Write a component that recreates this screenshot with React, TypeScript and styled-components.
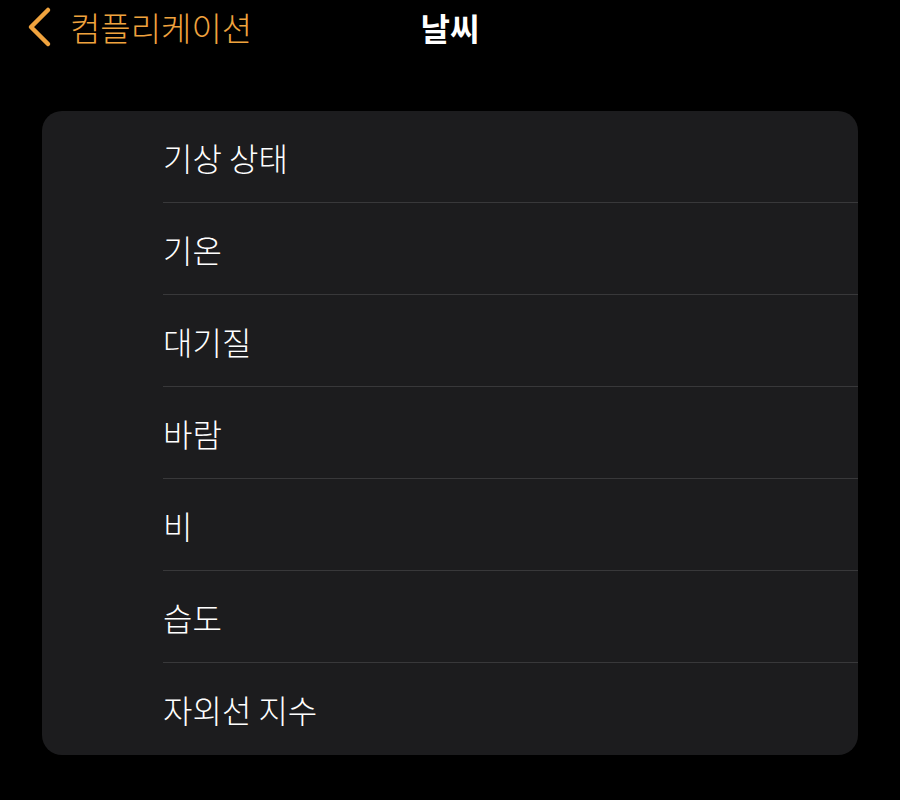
import React from "react";
import styled, { createGlobalStyle } from "styled-components";

const Global = createGlobalStyle`
  html, body { margin: 0; padding: 0; background: #000; }
  body { font-family: "Noto Sans CJK KR", "Noto Sans", sans-serif; }
`;

const Page = styled.div`
  width: 900px;
  height: 800px;
  background: #000;
  display: flex;
  flex-direction: column;
`;

const NavBar = styled.div`
  position: relative;
  height: 56px;
  display: flex;
  align-items: center;
  padding-left: 26px;
`;

const Back = styled.div`
  display: flex;
  align-items: center;
  gap: 18px;
  color: #f0a33e;
  font-size: 33px;
  font-weight: 300;
  line-height: 1;
  margin-top: -2px;
`;

const Title = styled.div`
  position: absolute;
  left: 0;
  right: 0;
  top: 0;
  height: 54px;
  display: flex;
  align-items: center;
  justify-content: center;
  color: #fff;
  font-size: 32px;
  font-weight: 700;
  pointer-events: none;
`;

const Card = styled.div`
  margin: 55px 42px 0 42px;
  background: #1c1c1e;
  border-radius: 20px;
  overflow: hidden;
  display: flex;
  flex-direction: column;
`;

const Row = styled.div<{ $last?: boolean }>`
  box-sizing: border-box;
  margin-left: 121px;
  height: 92px;
  border-bottom: ${(p) => (p.$last ? "none" : "1px solid #38383a")};
  display: flex;
  align-items: center;
  color: #fff;
  font-size: 32px;
  font-weight: 300;
`;

const items = ["기상 상태", "기온", "대기질", "바람", "비", "습도", "자외선 지수"];

export default function App() {
  return (
    <Page>
      <Global />
      <NavBar>
        <Back>
          <svg width="26" height="42" viewBox="0 0 26 42">
            <path d="M22 4 L5 21 L22 38" fill="none" stroke="#f0a33e" strokeWidth="4.5" strokeLinecap="round" strokeLinejoin="round" />
          </svg>
          <span>컴플리케이션</span>
        </Back>
        <Title>날씨</Title>
      </NavBar>
      <Card>
        {items.map((t, i) => (
          <Row key={t} $last={i === items.length - 1}>
            {t}
          </Row>
        ))}
      </Card>
    </Page>
  );
}
